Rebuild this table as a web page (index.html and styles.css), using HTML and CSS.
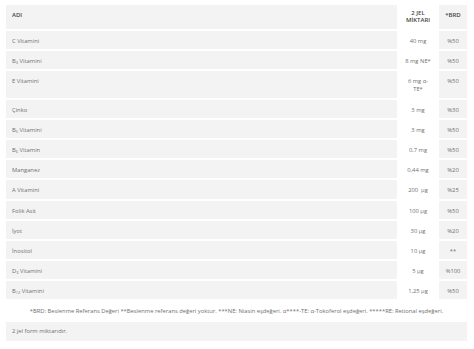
FILE: index.html
```html
<!DOCTYPE html>
<html lang="tr">
<head>
<meta charset="utf-8">
<link rel="stylesheet" href="styles.css">
</head>
<body>
<table class="nt">
  <thead>
    <tr><th class="c-name">ADI</th><th class="c-amt">2 JEL<br>MİKTARI</th><th class="c-brd">*BRD</th></tr>
  </thead>
  <tbody>
    <tr><td>C Vitamini</td><td class="c-amt">40 mg</td><td class="c-brd">%50</td></tr>
    <tr><td>B<sub>3</sub> Vitamini</td><td class="c-amt">8 mg NE*</td><td class="c-brd">%50</td></tr>
    <tr><td>E Vitamini</td><td class="c-amt">6 mg α-<br>TE*</td><td class="c-brd">%50</td></tr>
    <tr><td>Çinko</td><td class="c-amt">3 mg</td><td class="c-brd">%30</td></tr>
    <tr><td>B<sub>5</sub> Vitamini</td><td class="c-amt">3 mg</td><td class="c-brd">%50</td></tr>
    <tr><td>B<sub>6</sub> Vitamin</td><td class="c-amt">0,7 mg</td><td class="c-brd">%50</td></tr>
    <tr><td>Manganez</td><td class="c-amt">0,44 mg</td><td class="c-brd">%20</td></tr>
    <tr><td>A Vitamini</td><td class="c-amt">200 &nbsp;µg</td><td class="c-brd">%25</td></tr>
    <tr><td>Folik Asit</td><td class="c-amt">100 µg</td><td class="c-brd">%50</td></tr>
    <tr><td>İyot</td><td class="c-amt">30 µg</td><td class="c-brd">%20</td></tr>
    <tr><td>İnositol</td><td class="c-amt">10 µg</td><td class="c-brd">**</td></tr>
    <tr><td>D<sub>3</sub> Vitamini</td><td class="c-amt">5 µg</td><td class="c-brd">%100</td></tr>
    <tr><td>B<sub>12</sub> Vitamini</td><td class="c-amt">1,25 µg</td><td class="c-brd">%50</td></tr>
    <tr class="note"><td colspan="3">*BRD: Beslenme Referans Değeri **Beslenme referans değeri yoktur. ***NE: Niasin eşdeğeri. α****-TE: α-Tokoferol eşdeğeri. *****RE: Retional eşdeğeri.</td></tr>
    <tr class="last"><td colspan="3">2 jel form miktarıdır.</td></tr>
  </tbody>
</table>
</body>
</html>
```
FILE: styles.css
```css
html, body { margin: 0; padding: 0; background: #fff; }
body { padding: 5px 7px 0 6px; font-family: "Open Sans", "Noto Sans", sans-serif; color: #707070; }
.nt { width: 461px; border-collapse: collapse; font-size: 5.8px; line-height: 8px; }
.nt th, .nt td {
  background: #f3f3f3;
  border-bottom: 2px solid #fff;
  vertical-align: top;
  padding: 6px 6px 4.2px 6px;
  text-align: left;
  font-weight: 400;
  white-space: nowrap;
}
.nt th { color: #454545; font-weight: 600; font-size: 6px; padding: 6px 6px 10px 6px; }
.nt th.c-amt { line-height: 7px; padding: 5px 0 5px; }
.nt .c-amt { width: 42px; box-sizing: border-box; padding-left: 0; padding-right: 0; background: #fff; text-align: center; }
.nt .c-brd { width: 28px; box-sizing: border-box; padding-left: 0; padding-right: 0; text-align: center; }
.nt sub { font-size: 4px; line-height: 0; vertical-align: -1px; }
.nt .note td { background: #fff; text-align: center; padding: 6px 0 5px; }
.nt .last td { padding: 5px 6px 6px; }
```
